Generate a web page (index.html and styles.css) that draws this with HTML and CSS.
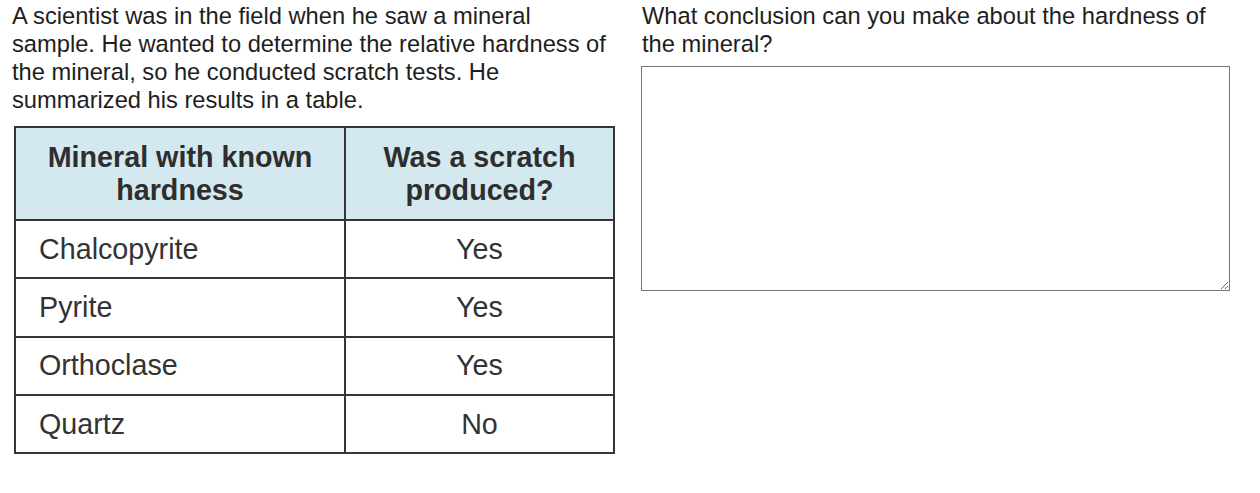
FILE: index.html
```html
<!DOCTYPE html>
<html>
<head>
<meta charset="utf-8">
<link rel="stylesheet" href="styles.css">
</head>
<body>
<div class="page">
  <div class="col-left">
    <p class="prompt">A scientist was in the field when he saw a mineral sample. He wanted to determine the relative hardness of the mineral, so he conducted scratch tests. He summarized his results in a table.</p>
    <table class="results">
      <thead>
        <tr>
          <th class="c1">Mineral with known<br>hardness</th>
          <th class="c2">Was a scratch<br>produced?</th>
        </tr>
      </thead>
      <tbody>
        <tr><td class="name">Chalcopyrite</td><td class="val">Yes</td></tr>
        <tr><td class="name">Pyrite</td><td class="val">Yes</td></tr>
        <tr><td class="name">Orthoclase</td><td class="val">Yes</td></tr>
        <tr><td class="name">Quartz</td><td class="val">No</td></tr>
      </tbody>
    </table>
  </div>
  <div class="col-right">
    <p class="prompt">What conclusion can you make about the hardness of the mineral?</p>
    <textarea class="answer"></textarea>
  </div>
</div>
</body>
</html>
```

FILE: styles.css
```css
html, body {
  margin: 0;
  padding: 0;
  background: #ffffff;
}
.page {
  display: grid;
  grid-template-columns: 610px 588px;
  column-gap: 20px;
  padding: 2px 0 0 12px;
  font-family: "Liberation Sans", Arial, sans-serif;
  color: #1e1e1e;
}
.prompt {
  margin: 0;
  font-size: 23.7px;
  line-height: 28px;
}
.col-left .prompt {
  max-width: 603px;
}
.results {
  margin: 12px 0 0 2px;
  border-collapse: collapse;
  width: 601px;
  color: #333333;
  font-size: 28.7px;
}
.results th, .results td {
  border: 2px solid #353535;
  padding: 0;
}
.results th {
  background: #d4e8ef;
  font-weight: bold;
  height: 91px;
  line-height: 33px;
  text-align: center;
  color: #2e2e2e;
}
.results .c1 { width: 328px; }
.results td {
  height: 56.3px;
}
.results .name {
  padding-left: 23px;
  text-align: left;
}
.results .val {
  text-align: center;
}
.answer {
  display: block;
  margin: 8px 0 0 -1px;
  width: 589px;
  height: 225px;
  box-sizing: border-box;
  border: 1px solid #767676;
  padding: 2px;
  font-family: "Liberation Sans", Arial, sans-serif;
}
```
